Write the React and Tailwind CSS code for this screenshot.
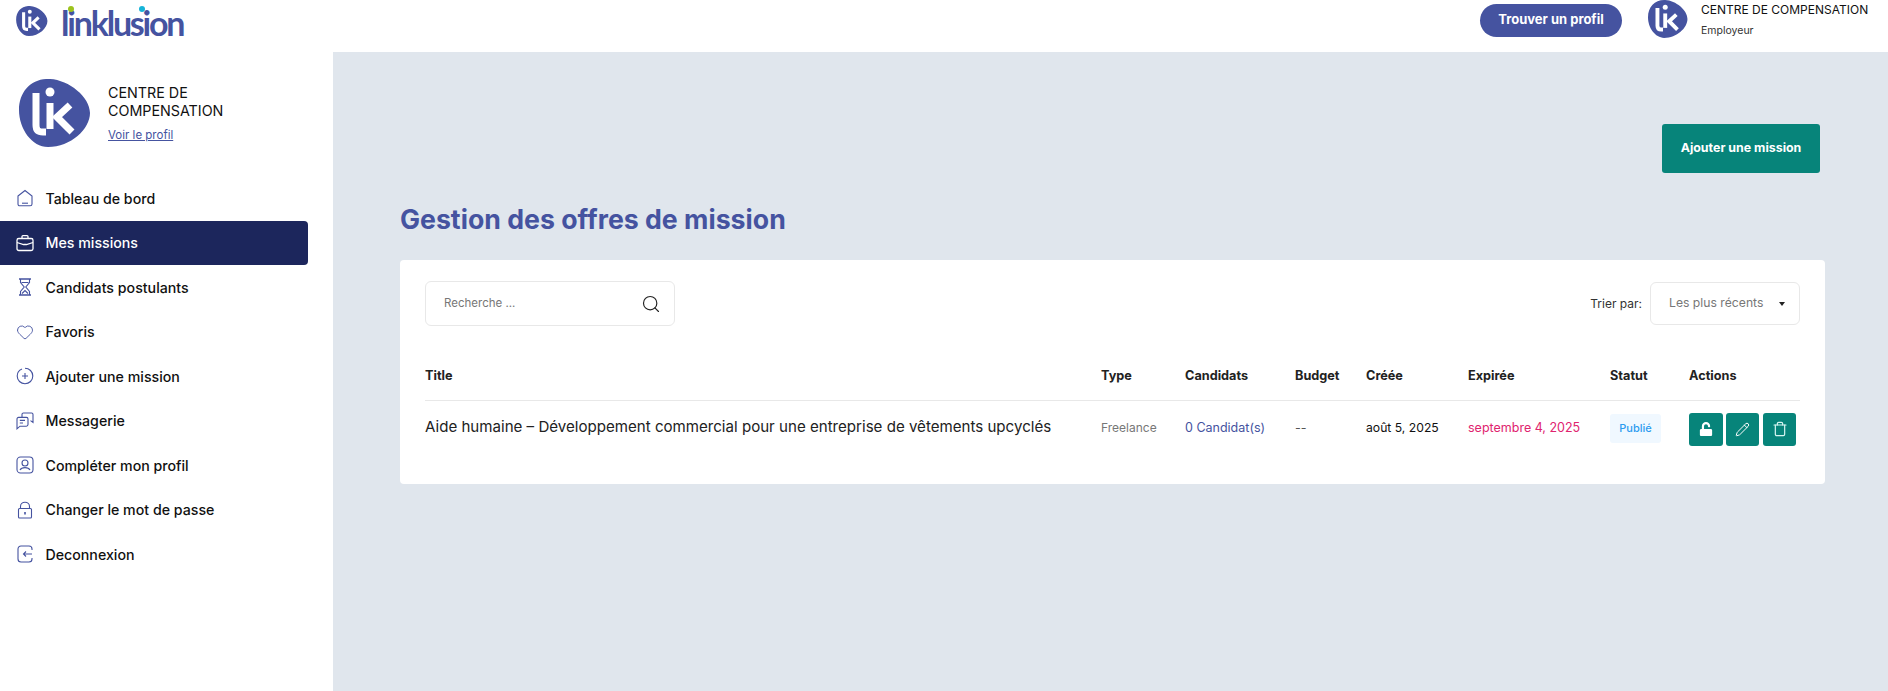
import React from "react";
import { Heart, Pencil, Search, Trash } from "lucide-react";
import { FaUnlock } from "react-icons/fa";

const LkLogo = ({ className }) => (
  <svg viewBox="0 0 72 68" className={className}>
    <path
      d="M31 0C50 1 71 18 71 34C71 50 52 68 29 68C13 68 0 50 0 31C0 12 13-1 31 0Z"
      fill="#4553a0"
    />
    <path d="M17 14V46C17 51 19 53 24 53H27" stroke="#fff" strokeWidth="7" fill="none" />
    <circle cx="31" cy="13" r="4.5" fill="#fff" />
    <path d="M31 24V50" stroke="#fff" strokeWidth="7" fill="none" />
    <path d="M51 26L38 38L53 53" stroke="#fff" strokeWidth="7" fill="none" />
  </svg>
);

const icon = "w-[18px] h-[18px] shrink-0";

const HomeIcon = () => (
  <svg viewBox="0 0 18 18" fill="none" stroke="#4553a0" strokeWidth="1.1" className={icon}>
    <path d="M2 7L9 1.5L16 7V15C16 16 15.3 16.8 14.2 16.8H3.8C2.7 16.8 2 16 2 15Z" />
    <path d="M6 14.2H12" />
  </svg>
);

const CaseIcon = () => (
  <svg viewBox="0 0 18 18" fill="none" stroke="#fff" strokeWidth="1.3" className={icon}>
    <rect x="1" y="4.5" width="16" height="12" rx="1.8" />
    <path d="M6 4.5V2.6C6 2 6.4 1.6 7 1.6H11C11.6 1.6 12 2 12 2.6V4.5" />
    <path d="M1 8.5L7.5 10.5H10.5L17 8.5" />
  </svg>
);

const SandIcon = () => (
  <svg viewBox="0 0 18 18" fill="none" stroke="#4553a0" strokeWidth="1.1" className={icon}>
    <path d="M3 1H15M3 17H15" strokeWidth="1.5" />
    <path d="M4.5 1V4.5L8.2 9L4.5 13.5V17M13.5 1V4.5L9.8 9L13.5 13.5V17" />
    <path d="M6 15.5L9 12.5L12 15.5M5.5 4.5H12.5" />
  </svg>
);

const PlusIcon = () => (
  <svg viewBox="0 0 18 18" fill="none" stroke="#4553a0" strokeWidth="1.1" className={icon}>
    <path d="M6 2C3.2 3.1 1.2 5.8 1.2 9C1.2 13.3 4.7 16.8 9 16.8C13.3 16.8 16.8 13.3 16.8 9C16.8 4.7 13.3 1.2 9 1.2" />
    <path d="M9 6V12M6 9H12" />
  </svg>
);

const ChatIcon = () => (
  <svg viewBox="0 0 18 18" fill="none" stroke="#4553a0" strokeWidth="1.1" className={icon}>
    <path d="M6 5V2.4C6 1.6 6.6 1 7.4 1H15.6C16.4 1 17 1.6 17 2.4V10.5L14.5 8.6" />
    <path d="M1 16.8V7C1 6 1.6 5.4 2.6 5.4H10.4C11.4 5.4 12 6 12 7V12.6C12 13.6 11.4 14.2 10.4 14.2H4Z" />
    <path d="M3.8 8.4H9M3.8 11H7" />
  </svg>
);

const ProfileIcon = () => (
  <svg viewBox="0 0 18 18" fill="none" stroke="#4553a0" strokeWidth="1.1" className={icon}>
    <rect x="1" y="1" width="16" height="16" rx="3.5" />
    <circle cx="9" cy="7" r="3" />
    <path d="M4 14C5 12 7 11.6 9 11.6C11 11.6 13 12 14 14" />
  </svg>
);

const LockIcon = () => (
  <svg viewBox="0 0 18 18" fill="none" stroke="#4553a0" strokeWidth="1.1" className={icon}>
    <rect x="2.5" y="7.5" width="13" height="9.5" rx="1" />
    <path d="M4.5 7.5V5.5C4.5 3 6.5 1.2 9 1.2C11.5 1.2 13.5 3 13.5 5.5V7.5" />
    <path d="M9 11V13.5" strokeWidth="1.6" />
  </svg>
);

const LogoutIcon = () => (
  <svg viewBox="0 0 18 18" fill="none" stroke="#4553a0" strokeWidth="1.1" className={icon}>
    <path d="M16 5V4C16 2.3 14.8 1 13 1H5C3.2 1 2 2.3 2 4V14C2 15.7 3.2 17 5 17H13C14.8 17 16 15.7 16 14V13" />
    <path d="M16 9H7.5M10 6.5L7.5 9L10 11.5" />
  </svg>
);

const links = [
  { label: "Tableau de bord", icon: <HomeIcon /> },
  { label: "Mes missions", icon: <CaseIcon />, active: true },
  { label: "Candidats postulants", icon: <SandIcon /> },
  { label: "Favoris", icon: <Heart size={18} strokeWidth={1.2} color="#4553a0" className="shrink-0" /> },
  { label: "Ajouter une mission", icon: <PlusIcon /> },
  { label: "Messagerie", icon: <ChatIcon /> },
  { label: "Compléter mon profil", icon: <ProfileIcon /> },
  { label: "Changer le mot de passe", icon: <LockIcon /> },
  { label: "Deconnexion", icon: <LogoutIcon /> },
];

const App = () => {
  return (
    <div className="h-screen flex flex-col overflow-hidden bg-white font-['Inter','Liberation_Sans',sans-serif] text-[#111]">
      <header className="h-[52px] shrink-0 flex items-center bg-white pl-4 pr-[21px] pb-[12px]">
        <LkLogo className="w-8 h-[30px] mt-[1px]" />
        <div className="relative ml-[13px] mt-[5px] font-['Lato',sans-serif] font-bold text-[34px] leading-9 tracking-[-2.2px] text-[#4553a0]">
          linklusion
          <span className="absolute left-[7px] top-[1px] w-[6px] h-[6px] rounded-full bg-[#9cc31d]" />
          <span className="absolute left-[78px] top-[1px] w-[6px] h-[6px] rounded-full bg-[#16b4d8]" />
        </div>
        <button className="ml-auto w-[142px] h-[33px] rounded-full bg-[#4553a0] text-white text-[13px] font-bold">
          Trouver un profil
        </button>
        <LkLogo className="ml-[26px] w-10 h-[38px] mb-[2px]" />
        <div className="ml-[13px] w-[166px]">
          <div className="text-[12px] leading-4 mb-[5px] whitespace-nowrap">CENTRE DE COMPENSATION</div>
          <div className="text-[10.5px] leading-4 text-[#333]">Employeur</div>
        </div>
      </header>

      <div className="flex flex-1 min-h-0">
        <aside className="w-[333px] shrink-0 bg-white">
          <div className="flex items-center pl-[19px] pt-[27px]">
            <LkLogo className="w-[72px] h-[68px]" />
            <div className="ml-[17px]">
              <div className="text-[14.3px] leading-[18px] w-[130px]">CENTRE DE COMPENSATION</div>
              <a className="block mt-[7px] text-[11.5px] leading-4 text-[#4553a0] underline">Voir le profil</a>
            </div>
          </div>
          <nav className="mt-[29px] w-[308px]">
            {links.map((link) => (
              <div
                key={link.label}
                className={`h-[44.5px] flex items-center gap-[11.5px] pl-4 text-[14.2px] font-[450] whitespace-nowrap ${
                  link.active ? "bg-[#1c265c] text-white rounded-r-[4px]" : "text-[#111]"
                }`}
              >
                {link.icon}
                {link.label}
              </div>
            ))}
          </nav>
        </aside>

        <main className="flex-1 bg-[#e0e6ed] pt-[72px] pl-[67px] pr-[63px]">
          <div className="flex justify-end pr-[5px]">
            <button className="w-[158px] h-[49px] rounded-[3px] bg-[#07847a] text-white text-[12.4px] font-bold">
              Ajouter une mission
            </button>
          </div>
          <h1 className="mt-[28px] text-[26.7px] leading-9 font-bold text-[#4553a0]">
            Gestion des offres de mission
          </h1>
          <section className="mt-[23px] h-[224px] bg-white rounded-[4px] px-[25px] pt-[21px]">
            <div className="flex items-center justify-between">
              <div className="w-[250px] h-[45px] flex items-center justify-between pl-[18px] pr-[13px] border border-[#e8e8e8] rounded-[6px] text-[11.5px] text-[#777]">
                Recherche ...
                <Search size={20} strokeWidth={1.4} color="#222" />
              </div>
              <div className="flex items-center gap-2">
                <span className="text-[12px] text-[#333]">Trier par:</span>
                <div className="w-[150px] h-[43px] flex items-center justify-between pl-[18px] pr-[14px] border border-[#e8e8e8] rounded-[6px] text-[12.2px] text-[#777]">
                  Les plus récents
                  <span className="w-0 h-0 border-x-[3px] border-x-transparent border-t-[4px] border-t-[#222]" />
                </div>
              </div>
            </div>

            <table className="mt-[26px] w-full table-fixed text-left">
              <colgroup>
                <col className="w-[676px]" />
                <col className="w-[84px]" />
                <col className="w-[110px]" />
                <col className="w-[71px]" />
                <col className="w-[102px]" />
                <col className="w-[142px]" />
                <col className="w-[79px]" />
                <col className="w-[111px]" />
              </colgroup>
              <thead>
                <tr className="h-[48px] border-b border-[#e8e8e8] text-[12.7px] text-[#222]">
                  <th className="font-bold pb-[1px]">Title</th>
                  <th className="font-bold pb-[1px]">Type</th>
                  <th className="font-bold pb-[1px]">Candidats</th>
                  <th className="font-bold pb-[1px]">Budget</th>
                  <th className="font-bold pb-[1px]">Créée</th>
                  <th className="font-bold pb-[1px]">Expirée</th>
                  <th className="font-bold pb-[1px]">Statut</th>
                  <th className="font-bold pb-[1px]">Actions</th>
                </tr>
              </thead>
              <tbody>
                <tr className="text-[12.5px] whitespace-nowrap">
                  <td className="text-[15.1px] pt-[15px] pb-[37px] align-top text-[#222]">
                    Aide humaine – Développement commercial pour une entreprise de vêtements upcyclés
                  </td>
                  <td className="pt-[18px] pb-[37px] align-top text-[12px] text-[#777]">Freelance</td>
                  <td className="pt-[18px] pb-[37px] align-top text-[#4553a0]">0 Candidat(s)</td>
                  <td className="pt-[18px] pb-[37px] align-top text-[#555]">--</td>
                  <td className="pt-[18px] pb-[37px] align-top text-[12.2px] text-[#111]">août 5, 2025</td>
                  <td className="pt-[18px] pb-[37px] align-top text-[#e0246f]">septembre 4, 2025</td>
                  <td className="pt-[13px] pb-[37px] align-top">
                    <span className="block w-[51px] h-[29px] leading-[29px] text-center rounded-[3px] bg-[#f0f8ff] text-[#2d9cf0] text-[11px] font-medium">
                      Publié
                    </span>
                  </td>
                  <td className="pt-[12px] pb-[37px] align-top">
                    <div className="flex gap-[3px]">
                      <button className="w-[34px] h-[33px] flex items-center justify-center rounded-[3px] bg-[#07847a] text-white">
                        <FaUnlock size={14} />
                      </button>
                      <button className="w-[33px] h-[33px] flex items-center justify-center rounded-[3px] bg-[#07847a] text-white">
                        <Pencil size={15} strokeWidth={1.6} />
                      </button>
                      <button className="ml-[1px] w-[33px] h-[33px] flex items-center justify-center rounded-[3px] bg-[#07847a] text-[#d7f5f2]">
                        <Trash size={16} strokeWidth={1.8} />
                      </button>
                    </div>
                  </td>
                </tr>
              </tbody>
            </table>
          </section>
        </main>
      </div>
    </div>
  );
};

export default App;
